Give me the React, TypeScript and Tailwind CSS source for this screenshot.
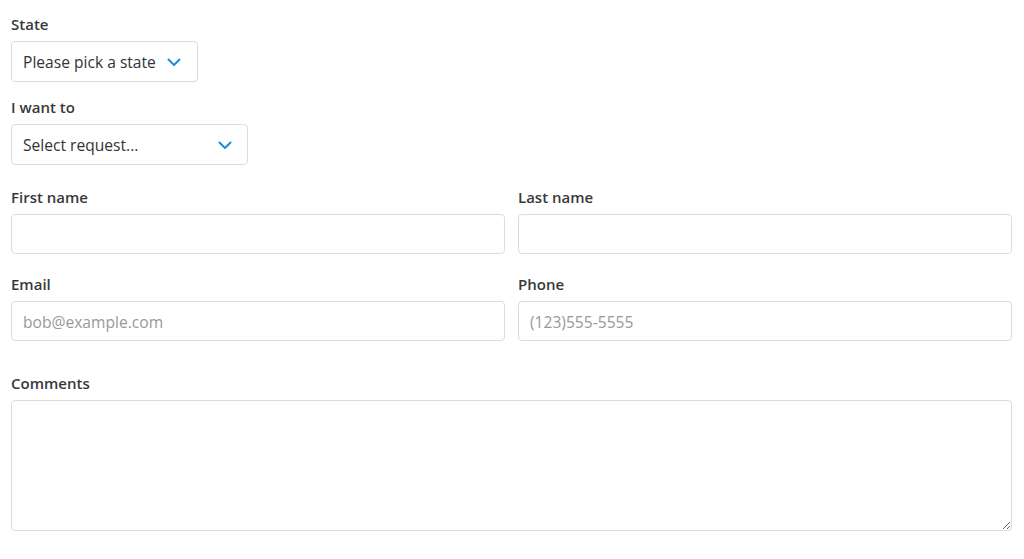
import React from 'react'

function Chevron() {
  return (
    <svg width="14" height="9" viewBox="0 0 14 9" fill="none" className="shrink-0">
      <path d="M1.5 1.5 L7 7 L12.5 1.5" stroke="#1a8fd6" strokeWidth="2" strokeLinecap="round" strokeLinejoin="round" />
    </svg>
  )
}

function Label({ children }: { children: React.ReactNode }) {
  return <label className="block h-[20px] leading-[20px] mb-[7px] text-[15px] font-semibold text-[#383838]">{children}</label>
}

export default function App() {
  const field =
    'block w-full h-[40px] border border-[#dcdcdc] rounded-[4px] bg-white pl-[11px] pt-[2px] text-[15.6px] text-[#333] placeholder:text-[#999] outline-none'

  return (
    <main className="w-[1024px] h-[559px] bg-white pl-[11px] pr-[12px] pt-[14px] font-['Open_Sans',sans-serif] overflow-hidden">
      {/* state */}
      <div>
        <Label>State</Label>
        <div className="w-[187px] h-[41px] border border-[#dcdcdc] rounded-[4px] flex items-center justify-between pl-[11px] pr-[16px] pt-[2px] text-[15.6px] text-[#333]">
          <span>Please pick a state</span>
          <Chevron />
        </div>
      </div>

      {/* request */}
      <div className="mt-[15px]">
        <Label>I want to</Label>
        <div className="w-[237px] h-[41px] border border-[#dcdcdc] rounded-[4px] flex items-center justify-between pl-[11px] pr-[15px] pt-[2px] text-[15.6px] text-[#333]">
          <span>Select request...</span>
          <Chevron />
        </div>
      </div>

      {/* names */}
      <div className="mt-[22px] grid grid-cols-2 gap-x-[13px]">
        <div>
          <Label>First name</Label>
          <input className={field} />
        </div>
        <div>
          <Label>Last name</Label>
          <input className={field} />
        </div>
      </div>

      {/* contact */}
      <div className="mt-[20px] grid grid-cols-2 gap-x-[13px]">
        <div>
          <Label>Email</Label>
          <input className={field} placeholder="bob@example.com" />
        </div>
        <div>
          <Label>Phone</Label>
          <input className={field} placeholder="(123)555-5555" />
        </div>
      </div>

      {/* comments */}
      <div className="mt-[32px]">
        <Label>Comments</Label>
        <textarea className="block w-full h-[131px] border border-[#dcdcdc] rounded-[4px] bg-white p-[11px] text-[15.6px] text-[#333] outline-none" />
      </div>
    </main>
  )
}
